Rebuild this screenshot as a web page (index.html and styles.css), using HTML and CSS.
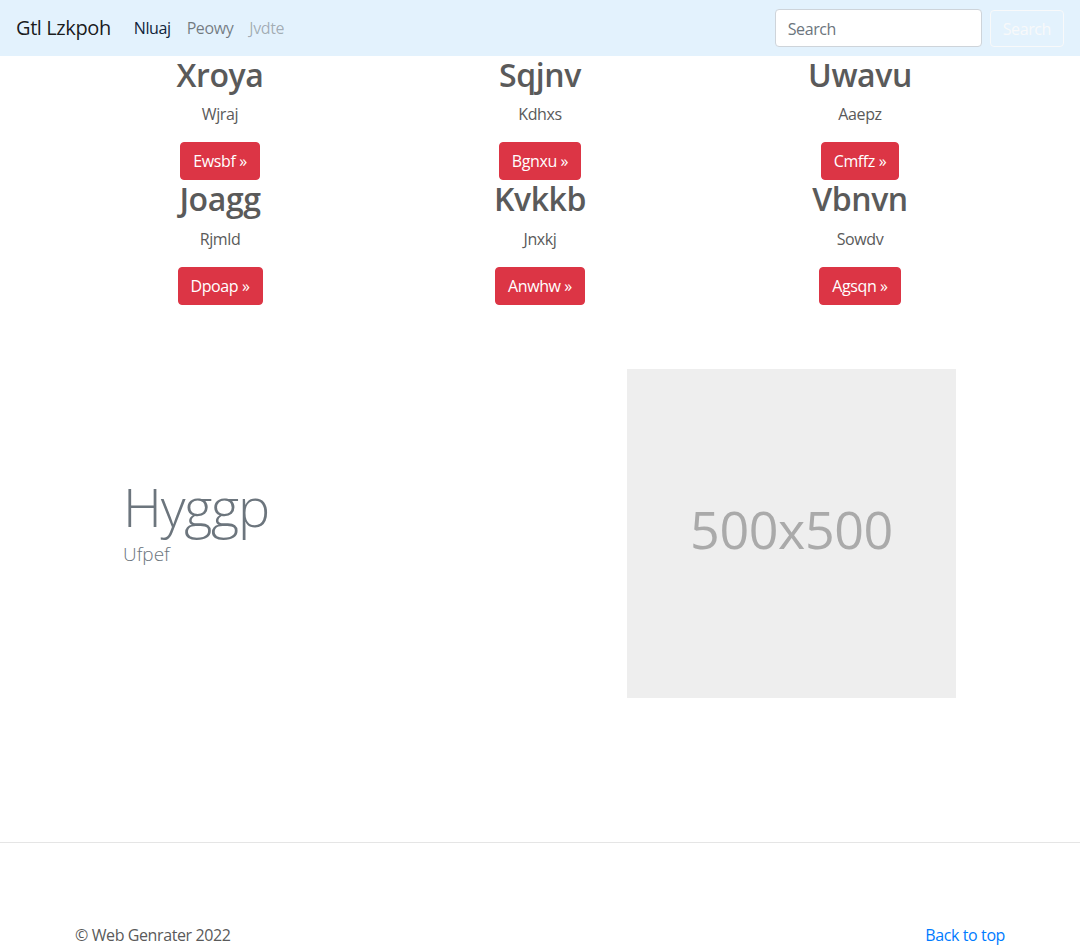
FILE: index.html
```html
<!DOCTYPE html>
<html lang="en">
<head>
<meta charset="utf-8">
<title>Gtl Lzkpoh</title>
<link rel="stylesheet" href="styles.css">
</head>
<body>
<nav class="navbar">
  <a class="brand" href="#">Gtl Lzkpoh</a>
  <ul class="nav-links">
    <li><a class="nav-link active" href="#">Nluaj</a></li>
    <li><a class="nav-link" href="#">Peowy</a></li>
    <li><a class="nav-link disabled" href="#">Jvdte</a></li>
  </ul>
  <form class="search-form">
    <input class="search-input" type="text" placeholder="Search">
    <button class="search-btn" type="button">Search</button>
  </form>
</nav>

<main>
  <section class="marketing">
    <div class="cell"><h2>Xroya</h2><p>Wjraj</p><a class="btn" href="#">Ewsbf »</a></div>
    <div class="cell"><h2>Sqjnv</h2><p>Kdhxs</p><a class="btn" href="#">Bgnxu »</a></div>
    <div class="cell"><h2>Uwavu</h2><p>Aaepz</p><a class="btn" href="#">Cmffz »</a></div>
    <div class="cell"><h2>Joagg</h2><p>Rjmld</p><a class="btn" href="#">Dpoap »</a></div>
    <div class="cell"><h2>Kvkkb</h2><p>Jnxkj</p><a class="btn" href="#">Anwhw »</a></div>
    <div class="cell"><h2>Vbnvn</h2><p>Sowdv</p><a class="btn" href="#">Agsqn »</a></div>
  </section>

  <section class="featurette">
    <div class="featurette-text">
      <h1 class="featurette-heading">Hyggp</h1>
      <p class="lead">Ufpef</p>
    </div>
    <div class="placeholder">500x500</div>
  </section>
</main>

<hr class="divider">

<footer class="footer">
  <p>© Web Genrater 2022</p>
  <a class="back" href="#">Back to top</a>
</footer>
</body>
</html>
```

FILE: styles.css
```css
* { box-sizing: border-box; }

body {
  margin: 0;
  font-family: "Open Sans", "Noto Sans", "Liberation Sans", sans-serif;
  font-size: 16px;
  line-height: 1.5;
  letter-spacing: -0.025em;
  color: #5a5a5a;
  background: #fff;
}

a { text-decoration: none; }

.navbar {
  display: flex;
  align-items: center;
  height: 56px;
  padding: 8px 16px;
  background: #e3f2fd;
}

.brand {
  font-size: 20px;
  line-height: 30px;
  color: rgba(0, 0, 0, 0.9);
  margin-right: 15px;
}

.nav-links {
  display: flex;
  list-style: none;
  margin: 0;
  padding: 0;
  flex: 1;
}

.nav-link {
  display: block;
  padding: 8px;
  color: rgba(0, 0, 0, 0.5);
}
.nav-link.active { color: #10243a; }
.nav-link.disabled { color: rgba(0, 0, 0, 0.3); }

.search-form {
  display: flex;
  align-items: center;
}

.search-input {
  width: 207px;
  height: 38px;
  padding: 6px 12px 5px;
  font: inherit;
  letter-spacing: inherit;
  color: #495057;
  background: #fff;
  border: 1px solid #ced4da;
  border-radius: 4px;
}
.search-input::placeholder { color: #6c757d; }

.search-btn {
  margin-left: 8px;
  height: 37px;
  padding: 6px 12px;
  font: inherit;
  letter-spacing: inherit;
  color: #f8f9fa;
  background: transparent;
  border: 1px solid #f8f9fa;
  border-radius: 4px;
}

.marketing {
  width: 960px;
  margin: 0 auto;
  display: grid;
  grid-template-columns: repeat(3, 1fr);
  text-align: center;
}

.cell { padding: 0 15px; }

.cell h2 {
  margin: 0 0 8px;
  font-size: 32px;
  font-weight: 600;
  line-height: 1.2;
}

.cell p { margin: 0 0 16px; }

.btn {
  display: inline-block;
  padding: 6px 12px;
  line-height: 24px;
  color: #fff;
  background: #dc3545;
  border: 1px solid #dc3545;
  border-radius: 4px;
}

.featurette {
  width: 960px;
  margin: 64px auto 0;
  padding: 0 64px 0 63px;
  display: flex;
  align-items: center;
  justify-content: space-between;
}

.featurette-text { margin-top: -24px; }

.featurette-heading {
  margin: 0;
  font-size: 54px;
  font-weight: 300;
  line-height: 1.15;
  letter-spacing: -1.2px;
  color: #6c757d;
}

.lead {
  margin: 3px 0 0;
  font-size: 19px;
  font-weight: 300;
  line-height: 1.4;
  letter-spacing: 0;
  color: #6c757d;
}

.placeholder {
  width: 329px;
  height: 329px;
  padding-bottom: 8px;
  display: flex;
  align-items: center;
  justify-content: center;
  background: #eee;
  color: #aaa;
  font-size: 52px;
}

.divider {
  margin: 144px 0 80px;
  border: 0;
  border-top: 1px solid #e5e5e5;
}

.footer {
  width: 960px;
  margin: 0 auto;
  padding: 0 15px;
  display: flex;
  justify-content: space-between;
}

.footer p { margin: 0; }

.back { color: #007bff; }
```
